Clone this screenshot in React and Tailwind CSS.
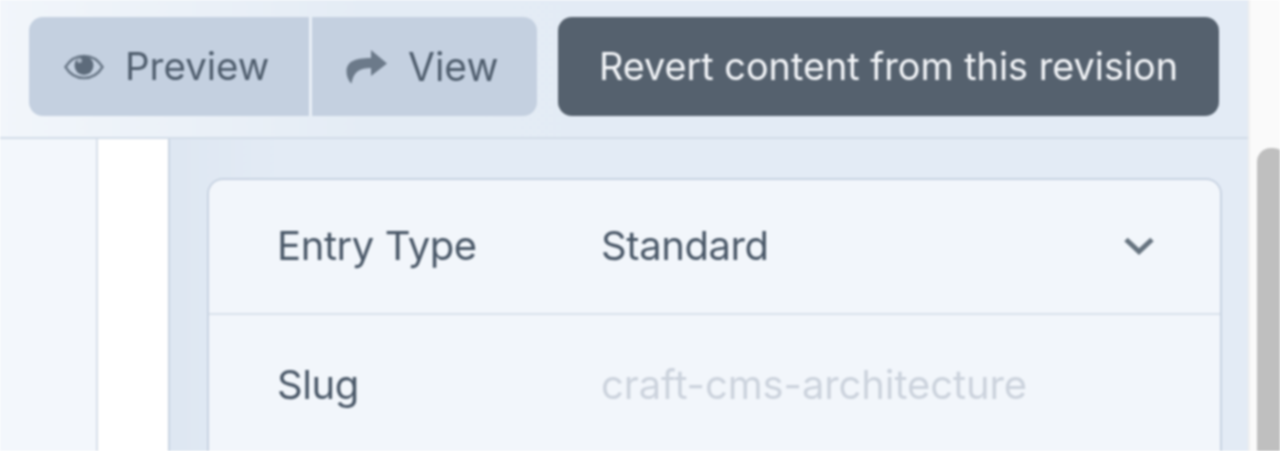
const EyeIcon = () => (
  <svg width="40" height="26" viewBox="0 0 40 26" className="shrink-0">
    <path d="M1.5 13C6 5.5 12.5 2 20 2s14 3.500 18.500 11C34 20.500 27.500 24 20 24S6 20.500 1.500 13z" fill="none" stroke="#6b7989" strokeWidth="2.500" />
    <circle cx="20" cy="11.500" r="9.500" fill="#5d6b7b" />
    <circle cx="15.500" cy="6.500" r="2.500" fill="#a9b5c4" />
  </svg>
);

const ShareIcon = () => (
  <svg width="42" height="38" viewBox="0 0 42 38" className="shrink-0">
    <path d="M25 2L41 15.500L25 28V20C14 20 7.500 23.500 5.500 35.500C2.500 33 0.500 28 0.500 23.500C0.500 14 8 10 25 10z" fill="#6c7a8a" />
  </svg>
);

const Chevron = () => (
  <svg width="32" height="20" viewBox="0 0 32 20" className="shrink-0">
    <path d="M3 3.500L16 15.500L29 3.500" fill="none" stroke="#66737f" strokeWidth="5" />
  </svg>
);

const Row = ({ label, children, last }) => (
  <div className={`flex items-center pl-[68px] pr-[65px] ${last ? "h-[139px]" : "h-[135px] pb-[2px] border-b-2 border-[#d9e1eb]"}`}>
    <div className="w-[324px] text-[40px] tracking-[-0.4px] text-[#4a5868]">{label}</div>
    {children}
  </div>
);

export default function App() {
  return (
    <div className="flex h-[451px] w-[1280px] overflow-hidden bg-[#fafafa] font-['Inter',sans-serif] blur-[0.8px]">
      <div className="flex w-[1248px] shrink-0 flex-col">
        <div className="flex h-[139px] shrink-0 items-start gap-[21px] border-b-2 border-[#d2dce8] bg-gradient-to-r from-[#f2f6fb] via-[#e4ecf5] via-30% to-[#e3ebf5] pt-[17px] pl-[29px]">
          <div className="flex h-[99px] w-[508px] overflow-hidden rounded-[14px] bg-[#c4d0e0] text-[#4f5d6d]">
            <div className="flex w-[283px] items-center gap-[21px] border-r-[3px] border-[#e9eff7] pt-[1px] pl-[35px] text-[38.500px]">
              <EyeIcon />
              Preview
            </div>
            <div className="flex flex-1 items-center gap-[20px] pt-[1px] pl-[34px] text-[39px]">
              <ShareIcon />
              View
            </div>
          </div>
          <div className="flex h-[99px] w-[661px] items-center justify-center rounded-[14px] bg-[#55616e] text-[37.800px] text-[#f4f6f9]">
            Revert content from this revision
          </div>
        </div>
        <div className="flex min-h-0 flex-1">
          <div className="w-[98px] shrink-0 border-r-2 border-[#d8e0ea] bg-[#f3f7fc]" />
          <div className="w-[72px] shrink-0 border-r-2 border-[#c9d4e2] bg-white" />
          <div className="min-w-0 flex-1 bg-gradient-to-r from-[#dee7f2] to-[#e3ebf5] to-10% pt-[39px] pl-[37px] pr-[26px]">
            <div className="rounded-t-[16px] border-2 border-b-0 border-[#c8d3e2] bg-[#f2f6fb]">
              <Row label="Entry Type">
                <div className="flex-1 text-[40px] tracking-[-0.4px] text-[#4a5868]">Standard</div>
                <Chevron />
              </Row>
              <Row label="Slug" last>
                <div className="text-[40px] tracking-[-0.1px] text-[#ccd3dd]">craft-cms-architecture</div>
              </Row>
            </div>
          </div>
        </div>
      </div>
      <div className="flex-1 border-l-2 border-[#efefef] pt-[148px] pl-[7px]">
        <div className="h-[400px] w-[30px] rounded-t-[14px] bg-[#bfbfbf]" />
      </div>
    </div>
  );
}
